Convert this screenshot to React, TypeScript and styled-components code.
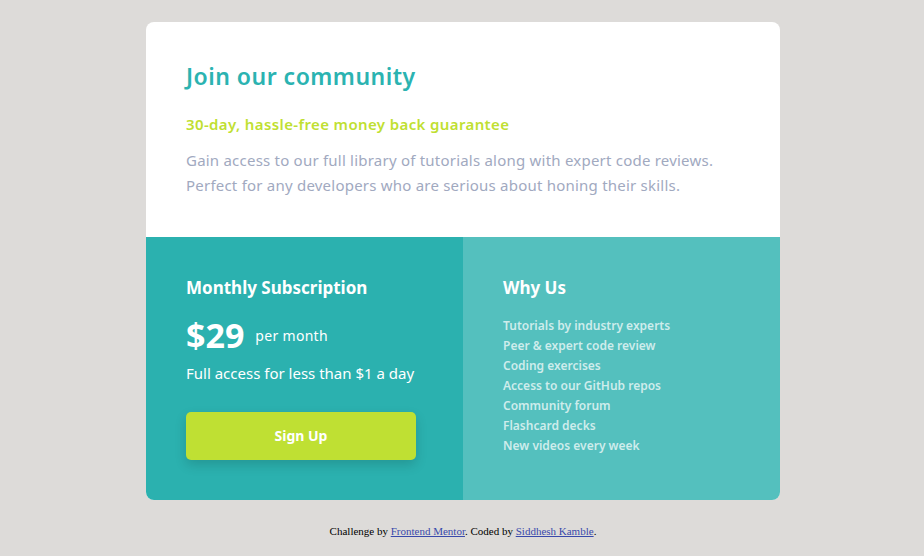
import React from "react";
import styled, { createGlobalStyle } from "styled-components";

const Global = createGlobalStyle`
  html, body { margin: 0; padding: 0; }
  body {
    background: #dddbd9;
    font-family: "Noto Sans", "Open Sans", sans-serif;
  }
`;

const Page = styled.main`
  display: flex;
  flex-direction: column;
  align-items: center;
  padding: 22px 0 0 2px;
`;

const Card = styled.section`
  width: 634px;
  border-radius: 8px;
  overflow: hidden;
  background: #fff;
  display: grid;
  grid-template-columns: 317px 317px;
`;

const Top = styled.div`
  grid-column: 1 / 3;
  height: 215px;
  box-sizing: border-box;
  padding: 40px 40px 0;
`;

const Title = styled.h1`
  margin: 0;
  font-size: 23px;
  font-weight: 600;
  color: #2bb3b1;
  line-height: 28px;
  letter-spacing: 0.48px;
`;

const Guarantee = styled.h2`
  margin: 24px 0 0;
  font-size: 15px;
  font-weight: 600;
  color: #bfdf32;
  line-height: 20px;
  letter-spacing: 0.38px;
`;

const Para = styled.p`
  margin: 14px 0 0;
  font-size: 15px;
  line-height: 25px;
  color: #a1a9bf;
  letter-spacing: 0.22px;
`;

const Panel = styled.div<{ $light?: boolean }>`
  height: 263px;
  box-sizing: border-box;
  padding: 41px 40px 0;
  background: ${(p) => (p.$light ? "#54c0be" : "#2bb1af")};
  color: #fff;
`;

const PanelTitle = styled.h3`
  margin: 0;
  font-size: 17px;
  font-weight: 700;
  line-height: 20px;
`;

const PriceRow = styled.div`
  display: flex;
  align-items: center;
  gap: 11px;
  margin-top: 17px;
`;

const Price = styled.span`
  font-size: 34px;
  font-weight: 700;
  line-height: 40px;
`;

const Per = styled.span`
  font-size: 14px;
  letter-spacing: 0.3px;
`;

const Access = styled.p`
  margin: 8px 0 0;
  font-size: 15px;
  line-height: 20px;
`;

const Button = styled.button`
  display: block;
  margin-top: 29px;
  width: 230px;
  height: 48px;
  padding: 0 0 2px;
  border: none;
  border-radius: 5px;
  background: #bfe033;
  color: #fff;
  font-family: inherit;
  font-size: 14px;
  font-weight: 700;
  box-shadow: 0 5px 12px rgba(0, 0, 0, 0.15);
  cursor: pointer;
`;

const List = styled.ul`
  list-style: none;
  margin: 18px 0 0;
  padding: 0;
`;

const Item = styled.li`
  font-size: 12px;
  line-height: 20px;
  font-weight: 600;
  color: rgba(255, 255, 255, 0.72);
`;

const Footer = styled.footer`
  margin-top: 25px;
  font-family: "Liberation Serif", serif;
  font-size: 11px;
  color: #000;
  a { color: #3949ab; }
`;

const items = [
  "Tutorials by industry experts",
  "Peer & expert code review",
  "Coding exercises",
  "Access to our GitHub repos",
  "Community forum",
  "Flashcard decks",
  "New videos every week",
];

export default function App() {
  return (
    <>
      <Global />
      <Page>
        <Card>
          <Top>
            <Title>Join our community</Title>
            <Guarantee>30-day, hassle-free money back guarantee</Guarantee>
            <Para>
              Gain access to our full library of tutorials along with expert code reviews.
              <br />
              Perfect for any developers who are serious about honing their skills.
            </Para>
          </Top>
          <Panel>
            <PanelTitle>Monthly Subscription</PanelTitle>
            <PriceRow>
              <Price>$29</Price>
              <Per>per month</Per>
            </PriceRow>
            <Access>Full access for less than $1 a day</Access>
            <Button>Sign Up</Button>
          </Panel>
          <Panel $light>
            <PanelTitle>Why Us</PanelTitle>
            <List>
              {items.map((t) => (
                <Item key={t}>{t}</Item>
              ))}
            </List>
          </Panel>
        </Card>
        <Footer>
          Challenge by <a href="#">Frontend Mentor</a>. Coded by <a href="#">Siddhesh Kamble</a>.
        </Footer>
      </Page>
    </>
  );
}
